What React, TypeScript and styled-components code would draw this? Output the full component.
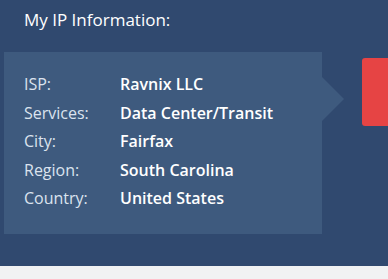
import React from 'react'
import styled, { createGlobalStyle } from 'styled-components'

const GlobalStyle = createGlobalStyle`
    html, body {
        margin: 0;
        padding: 0;
        background: #f1f2f3;
        font-family: 'Open Sans', 'Liberation Sans', sans-serif;
        overflow: hidden;
    }
`

const Section = styled.section`
    height: 266px;
    background: #30496f;
    overflow: hidden;
`

const Title = styled.h2`
    margin: 0;
    padding: 9px 24px 0;
    height: 52px;
    box-sizing: border-box;
    font-size: 17px;
    line-height: 22px;
    font-weight: 400;
    color: #ffffff;
`

const Row = styled.div`
    display: flex;
    align-items: flex-start;
    padding-left: 4px;
`

const InfoPanel = styled.div`
    position: relative;
    flex-shrink: 0;
    width: 318px;
    height: 182px;
    box-sizing: border-box;
    padding: 18px 20px 0;
    background: #3e5a7e;

    &::after {
        content: '';
        position: absolute;
        right: -22px;
        top: 25px;
        border-top: 22px solid transparent;
        border-bottom: 22px solid transparent;
        border-left: 22px solid #3e5a7e;
    }
`

const Line = styled.div`
    display: grid;
    grid-template-columns: 96px 1fr;
    font-size: 16px;
    line-height: 28.5px;
`

const Label = styled.span`
    color: #dbe3ee;
`

const Value = styled.span`
    color: #ffffff;
    font-weight: 600;
`

const Alert = styled.div`
    flex: 1;
    margin-left: 40px;
    margin-top: 6px;
    height: 68px;
    border-radius: 3px 0 0 3px;
    background: #e64444;
`

const rows: [string, string][] = [
    ['ISP:', 'Ravnix LLC'],
    ['Services:', 'Data Center/Transit'],
    ['City:', 'Fairfax'],
    ['Region:', 'South Carolina'],
    ['Country:', 'United States'],
]

export default function App() {
    return (
        <>
            <GlobalStyle />
            <Section>
                <Title>My IP Information:</Title>
                <Row>
                    <InfoPanel>
                        {rows.map(([label, value]) => (
                            <Line key={label}>
                                <Label>{label}</Label>
                                <Value>{value}</Value>
                            </Line>
                        ))}
                    </InfoPanel>
                    <Alert />
                </Row>
            </Section>
        </>
    )
}
